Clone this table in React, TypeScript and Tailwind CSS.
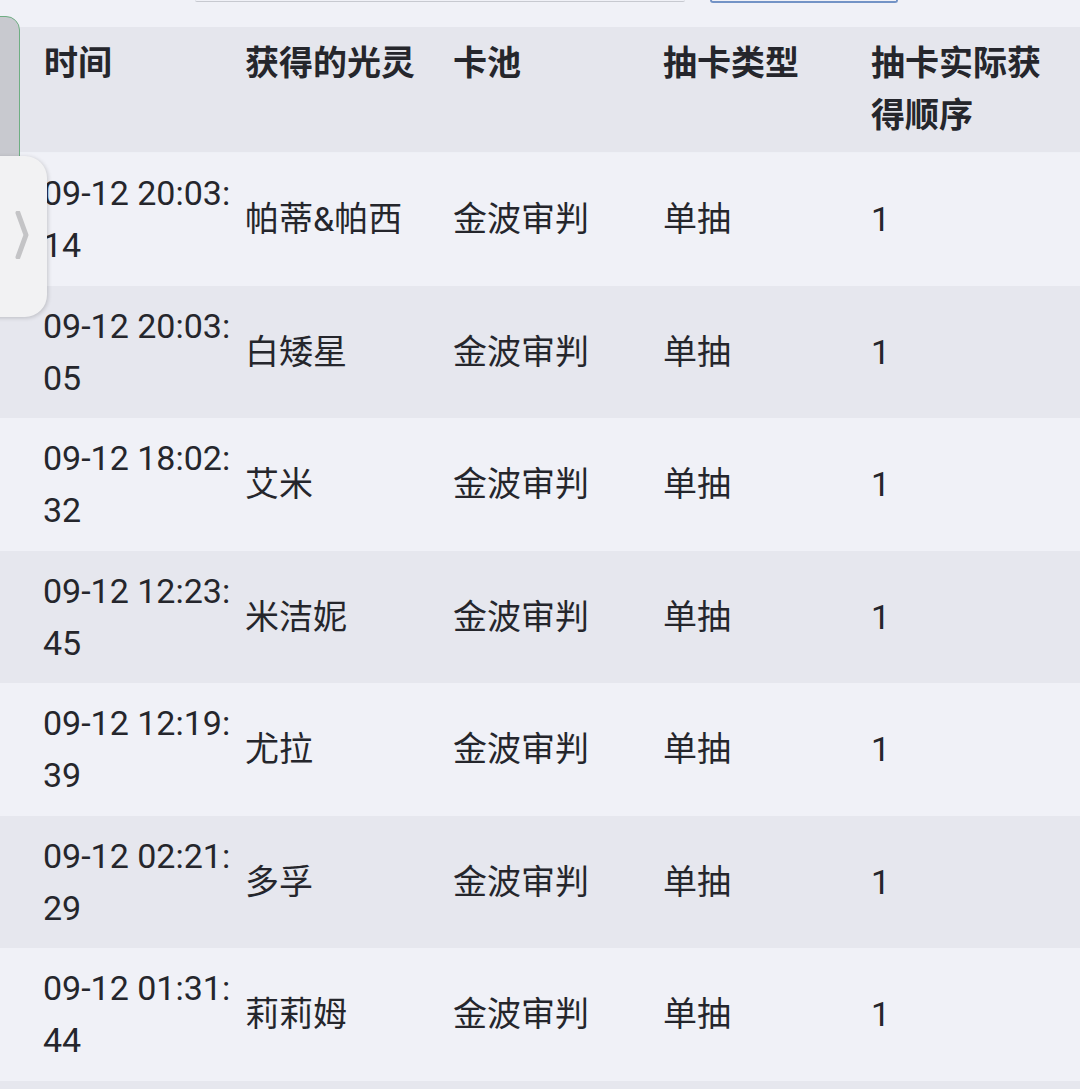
import React from "react";

const rows = [
  ["09-12 20:03:", "14", "帕蒂&帕西"],
  ["09-12 20:03:", "05", "白矮星"],
  ["09-12 18:02:", "32", "艾米"],
  ["09-12 12:23:", "45", "米洁妮"],
  ["09-12 12:19:", "39", "尤拉"],
  ["09-12 02:21:", "29", "多孚"],
  ["09-12 01:31:", "44", "莉莉姆"],
];

export default function App() {
  return (
    <div
      className="relative w-[1080px] h-[1089px] overflow-hidden bg-[#f0f1f7] text-[#25262c]"
      style={{ fontFamily: 'Roboto, "Noto Sans CJK SC", sans-serif' }}
    >
      {/* top controls (cut off) */}
      <div className="flex h-[27px] items-start">
        <div className="ml-[195px] w-[490px] h-[2px] mt-0 border-b border-[#c7c9d0] rounded-b-[2px]" />
        <div className="ml-[25px] w-[188px] h-[3px] border-2 border-t-0 border-[#7393c6] rounded-b-[4px]" />
      </div>

      {/* header */}
      <div className="grid grid-cols-[245px_208px_210px_208px_1fr] h-[126px] bg-[#e5e6ed] border-b border-[#eef0f6] text-[34px] leading-[52px] font-semibold">
        <div className="pl-[44px] pt-[10px]">时间</div>
        <div className="pt-[10px]">获得的光灵</div>
        <div className="pt-[10px]">卡池</div>
        <div className="pt-[10px]">抽卡类型</div>
        <div className="pr-[30px] pt-[10px]">抽卡实际获得顺序</div>
      </div>

      {/* rows */}
      {rows.map((r, i) => (
        <div
          key={i}
          className={`grid grid-cols-[245px_208px_210px_208px_1fr] h-[132.5px] items-center text-[34px] leading-[52px] ${
            i % 2 === 1 ? "bg-[#e6e7ee]" : "bg-[#f0f1f7]"
          }`}
        >
          <div className="pl-[43px] whitespace-nowrap">
            <div>{r[0]}</div>
            <div>{r[1]}</div>
          </div>
          <div className="whitespace-nowrap">{r[2]}</div>
          <div>金波审判</div>
          <div>单抽</div>
          <div>1</div>
        </div>
      ))}
      <div className="h-[20px] bg-[#e6e7ee]" />

      {/* left green-bordered strip */}
      <div className="absolute left-[-2px] top-[16px] w-[22px] h-[160px] bg-[#c8c9cf] border border-[#6fae83] rounded-tr-[14px]" />

      {/* side tab */}
      <div className="absolute left-[-10px] top-[156px] w-[57px] h-[161px] bg-[#f2f2f3] rounded-r-[22px] shadow-[1px_1px_4px_rgba(0,0,0,0.18)] flex items-center justify-center">
        <svg width="16" height="48" viewBox="0 0 16 48" className="ml-[6px] mt-[-4px]">
          <path d="M4 2 L12 24 L4 46" fill="none" stroke="#c4c4c6" strokeWidth="5" strokeLinecap="round" strokeLinejoin="round" />
        </svg>
      </div>
    </div>
  );
}
